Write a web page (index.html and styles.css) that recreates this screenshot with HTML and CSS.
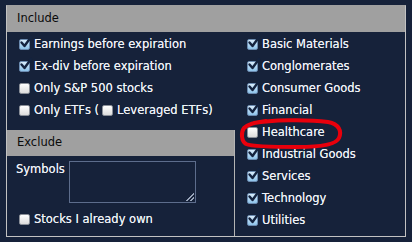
FILE: index.html
```html
<!DOCTYPE html>
<html>
<head>
<meta charset="utf-8">
<link rel="stylesheet" href="styles.css">
</head>
<body>
<div class="panel">
  <div class="head">Include</div>
  <div class="cols">
    <div class="left">
      <ul class="opts">
        <li><span class="cb on"><svg viewBox="0 0 12 12"><path d="M1.5 5.5 L4.5 9 L11 0"/></svg></span>Earnings before expiration</li>
        <li><span class="cb on"><svg viewBox="0 0 12 12"><path d="M1.5 5.5 L4.5 9 L11 0"/></svg></span>Ex-div before expiration</li>
        <li><span class="cb"></span>Only S&amp;P 500 stocks</li>
        <li><span class="cb"></span>Only ETFs (<span class="cb inl"></span>Leveraged ETFs)</li>
      </ul>
      <div class="exclude">
        <div class="head">Exclude</div>
        <div class="ex-body">
          <div class="sym"><label class="sym-label">Symbols</label><textarea class="sym-box"></textarea></div>
          <div class="row own"><span class="cb"></span>Stocks I already own</div>
        </div>
      </div>
    </div>
    <ul class="opts right">
      <li><span class="cb on"><svg viewBox="0 0 12 12"><path d="M1.5 5.5 L4.5 9 L11 0"/></svg></span>Basic Materials</li>
      <li><span class="cb on"><svg viewBox="0 0 12 12"><path d="M1.5 5.5 L4.5 9 L11 0"/></svg></span>Conglomerates</li>
      <li><span class="cb on"><svg viewBox="0 0 12 12"><path d="M1.5 5.5 L4.5 9 L11 0"/></svg></span>Consumer Goods</li>
      <li><span class="cb on"><svg viewBox="0 0 12 12"><path d="M1.5 5.5 L4.5 9 L11 0"/></svg></span>Financial</li>
      <li><span class="cb"></span>Healthcare</li>
      <li><span class="cb on"><svg viewBox="0 0 12 12"><path d="M1.5 5.5 L4.5 9 L11 0"/></svg></span>Industrial Goods</li>
      <li><span class="cb on"><svg viewBox="0 0 12 12"><path d="M1.5 5.5 L4.5 9 L11 0"/></svg></span>Services</li>
      <li><span class="cb on"><svg viewBox="0 0 12 12"><path d="M1.5 5.5 L4.5 9 L11 0"/></svg></span>Technology</li>
      <li><span class="cb on"><svg viewBox="0 0 12 12"><path d="M1.5 5.5 L4.5 9 L11 0"/></svg></span>Utilities</li>
    </ul>
  </div>
  <svg class="mark" viewBox="0 0 102 30" width="102" height="30">
    <path d="M14 4 C30 1 66 0 88 3 C99 5 102 12 99 19 C96 26 80 28 58 28 C36 28 13 28 6 25 C1 22 1 13 4 9 C8 5 16 3 26 2"/>
  </svg>
</div>
</body>
</html>
```
FILE: styles.css
```css
* { box-sizing: border-box; }
html, body {
  margin: 0;
  padding: 0;
  background: #16223a;
}
body {
  font-family: "DejaVu Sans", "Liberation Sans", sans-serif;
  font-size: 11.5px;
  color: #eef2f8;
}
.panel {
  position: relative;
  margin: 5px 0 0 6px;
  width: 400px;
  height: 232px;
  border: 1px solid #c2c2c2;
  border-top-color: #a0a0a0;
}
.head {
  height: 26px;
  background: #a0a0a0;
  color: #0a0a0a;
  padding-left: 10px;
  line-height: 25px;
}
.cols {
  display: flex;
  padding-top: 1px;
}
.left {
  width: 228px;
  flex: none;
}
.opts {
  list-style: none;
  margin: 0;
  padding: 0 0 0 12px;
}
.opts li, .row {
  height: 22px;
  display: flex;
  align-items: center;
  text-shadow: 0 0 0.6px rgba(255,255,255,0.8);
}
.right {
  flex: 1;
}
.cb {
  position: relative;
  flex: none;
  width: 11px;
  height: 11px;
  margin-right: 4px;
  border-radius: 2px;
  border: 1px solid #8a8f98;
  background: linear-gradient(#ffffff, #dcdcdc);
}
.cb.on {
  border-color: #6b8bb0;
  background: linear-gradient(#d8ecfb, #8ec3ea);
}
.cb svg {
  position: absolute;
  left: 0;
  top: -3px;
  width: 12px;
  height: 12px;
  overflow: visible;
}
.cb svg path {
  fill: none;
  stroke: #14233f;
  stroke-width: 2.4;
  stroke-linecap: round;
  stroke-linejoin: round;
}
.cb.inl {
  margin-left: 3px;
}
.exclude {
  margin-top: 9px;
  border-right: 1px solid #b4b4b4;
  height: 106px;
}
.ex-body {
  padding: 5px 0 0 9px;
}
.sym {
  display: flex;
  align-items: flex-start;
}
.sym-label {
  width: 53px;
  padding-top: 1px;
  text-shadow: 0 0 0.6px rgba(255,255,255,0.8);
}
.sym-box {
  display: block;
  width: 127px;
  height: 42px;
  margin: 0;
  padding: 2px;
  border: 1px solid #5d6d8c;
  background:
    linear-gradient(135deg, transparent 0 52%, #9aa6bb 52% 62%, transparent 62% 76%, #9aa6bb 76% 86%, transparent 86%) no-repeat right 1px bottom 1px / 9px 9px,
    #16223a;
  resize: none;
  outline: none;
}
.own {
  margin-top: 5px;
  padding-left: 3px;
}
.mark {
  position: absolute;
  left: 233px;
  top: 113px;
  overflow: visible;
}
.mark path {
  fill: none;
  stroke: #e8000c;
  stroke-width: 4;
  stroke-linecap: round;
}
```
